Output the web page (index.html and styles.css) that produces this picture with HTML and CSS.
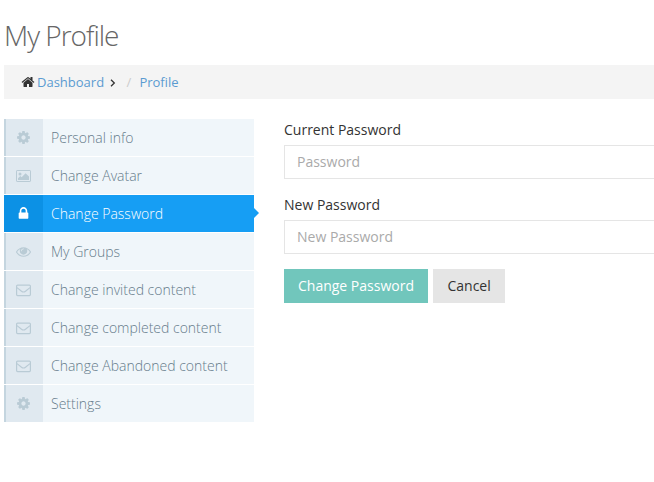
FILE: index.html
```html
<!DOCTYPE html>
<html lang="en">
<head>
<meta charset="utf-8">
<title>My Profile</title>
<link rel="stylesheet" href="styles.css">
</head>
<body>
<svg class="sprite" aria-hidden="true">
  <symbol id="home" viewBox="0 0 1792 1792"><path d="M1472 992v480q0 26-19 45t-45 19h-384v-384h-256v384h-384q-26 0-45-19t-19-45v-480q0-1 .5-3t.5-3l575-474 575 474q1 2 1 6zm223-69l-62 74q-8 9-21 11h-3q-13 0-21-7l-692-577-692 577q-12 8-24 7-13-2-21-11l-62-74q-8-10-7-23.5t11-21.5l719-599q32-26 76-26t76 26l244 204v-195q0-14 9-23t23-9h192q14 0 23 9t9 23v408l219 182q10 8 11 21.5t-7 23.5z"/></symbol>
  <symbol id="cog" viewBox="0 0 1792 1792"><path d="M1152 896q0-106-75-181t-181-75-181 75-75 181 75 181 181 75 181-75 75-181zm512-109v222q0 12-8 23t-20 13l-185 28q-19 54-39 91 35 50 107 138 10 12 10 25t-9 23q-27 37-99 108t-94 71q-12 0-26-9l-138-108q-44 23-91 38-16 136-29 186-7 28-36 28h-222q-14 0-24.5-8.5t-11.5-21.5l-28-184q-49-16-90-37l-141 107q-10 9-25 9-14 0-25-11-126-114-165-168-7-10-7-23 0-12 8-23 15-21 51-66.5t54-70.5q-27-50-41-99l-183-27q-13-2-21-12.5t-8-23.5v-222q0-12 8-23t19-13l186-28q14-46 39-92-40-57-107-138-10-12-10-24 0-10 9-23 26-36 98.5-107.5t94.5-71.5q13 0 26 10l138 107q44-23 91-38 16-136 29-186 7-28 36-28h222q14 0 24.5 8.5t11.5 21.5l28 184q49 16 90 37l142-107q9-9 24-9 13 0 25 10 129 119 165 170 7 8 7 22 0 12-8 23-15 21-51 66.5t-54 70.5q26 50 41 98l183 28q13 2 21 12.5t8 23.5z"/></symbol>
  <symbol id="picture" viewBox="0 0 16 14"><rect x=".5" y="1.5" width="14" height="11" rx=".6" fill="none" stroke="currentColor"/><circle cx="4" cy="5" r="1.5"/><path d="M2 11V9.3l2.3-2.2 1.3 1.2L9.6 4.2 13 7.5V11z"/></symbol>
  <symbol id="lock" viewBox="0 0 1792 1792"><path d="M640 768h512v-192q0-106-75-181t-181-75-181 75-75 181v192zm832 96v576q0 40-28 68t-68 28h-960q-40 0-68-28t-28-68v-576q0-40 28-68t68-28h32v-192q0-184 132-316t316-132 316 132 132 316v192h32q40 0 68 28t28 68z"/></symbol>
  <symbol id="eye" viewBox="0 0 1792 1792"><path d="M1664 960q-152-236-381-353 61 104 61 225 0 185-131.500 316.500t-316.500 131.500-316.500-131.500-131.500-316.500q0-121 61-225-229 117-381 353 133 205 333.500 326.500t434.500 121.500 434.500-121.500 333.500-326.500zm-720-384q0-20-14-34t-34-14q-125 0-214.500 89.500t-89.500 214.500q0 20 14 34t34 14 34-14 14-34q0-86 61-147t147-61q20 0 34-14t14-34zm848 384q0 34-20 69-140 230-376.500 368.500t-499.500 138.500-499.500-139-376.500-368q-20-35-20-69t20-69q140-229 376.500-368t499.500-139 499.500 139 376.500 368q20 35 20 69z"/></symbol>
  <symbol id="mail" viewBox="0 0 16 14"><rect x=".6" y="2.100" width="13.800" height="10.500" rx="1" fill="none" stroke="currentColor" stroke-width="1.200"/><path d="M1 4.600c1.500 1.300 3 2.400 4.500 3.600q2 1.600 4 0C11 7 12.500 5.900 14 4.600" fill="none" stroke="currentColor" stroke-width="1.100"/></symbol>
  <symbol id="angle" viewBox="0 0 6 8"><path d="M1 .8 4.300 4 1 7.200" fill="none" stroke="currentColor" stroke-width="1.300"/></symbol>
</svg>
<main class="page">
  <h1 class="title">My Profile</h1>
  <nav class="crumbs">
    <svg class="home"><use href="#home"/></svg>
    <a href="#">Dashboard</a>
    <svg class="angle"><use href="#angle"/></svg>
    <span class="slash">/</span>
    <a href="#">Profile</a>
  </nav>
  <div class="columns">
    <ul class="menu">
      <li><a href="#"><span class="icon"><svg><use href="#cog"/></svg></span>Personal info</a></li>
      <li><a href="#"><span class="icon"><svg class="wide"><use href="#picture"/></svg></span>Change Avatar</a></li>
      <li class="active"><a href="#"><span class="icon"><svg><use href="#lock"/></svg></span>Change Password</a></li>
      <li><a href="#"><span class="icon"><svg><use href="#eye"/></svg></span>My Groups</a></li>
      <li><a href="#"><span class="icon"><svg class="wide"><use href="#mail"/></svg></span>Change invited content</a></li>
      <li><a href="#"><span class="icon"><svg class="wide"><use href="#mail"/></svg></span>Change completed content</a></li>
      <li><a href="#"><span class="icon"><svg class="wide"><use href="#mail"/></svg></span>Change Abandoned content</a></li>
      <li><a href="#"><span class="icon"><svg><use href="#cog"/></svg></span>Settings</a></li>
    </ul>
    <form class="form">
      <label for="current">Current Password</label>
      <input id="current" type="password" placeholder="Password">
      <label for="new">New Password</label>
      <input id="new" type="password" placeholder="New Password">
      <div class="actions">
        <button type="button" class="primary">Change Password</button>
        <button type="button" class="cancel">Cancel</button>
      </div>
    </form>
  </div>
</main>
</body>
</html>
```
FILE: styles.css
```css
* { box-sizing: border-box; }
body {
  margin: 0;
  overflow: hidden;
  background: #fff;
  color: #333;
  font: 13px/20px "Open Sans", sans-serif;
}
svg { display: block; fill: currentColor; }
.sprite { position: absolute; width: 0; height: 0; }
a { color: #5b9bd1; text-decoration: none; }
.page { padding: 16px 0 0 4px; }
.title {
  margin: 0 0 11px;
  color: #666;
  font-size: 28px;
  font-weight: 300;
  line-height: 38px;
  letter-spacing: -1px;
}
.crumbs {
  display: flex;
  align-items: center;
  height: 34px;
  padding-left: 17px;
  background: #f4f4f4;
}
.home { width: 14px; height: 14px; margin-right: 2px; }
.angle { width: 6px; height: 8px; margin: 1px 11px 0 5.5px; }
.slash { margin-right: 8px; color: #ccc; }
.columns { display: flex; margin-top: 20px; }
.menu { flex: none; width: 250px; margin: 0; padding: 0; list-style: none; }
.menu li { position: relative; margin-bottom: 1px; }
.menu a {
  display: flex;
  align-items: center;
  height: 37px;
  border-left: 2px solid #c4d5df;
  background: #f0f6fa;
  color: #667c8b;
  font-size: 14px;
  font-weight: 300;
}
.icon {
  display: flex;
  align-items: center;
  justify-content: center;
  width: 37px;
  height: 37px;
  margin-right: 8px;
  padding-right: 2px;
  background: #e0e9f0;
  color: #b9cbd5;
}
.icon svg { width: 15px; height: 15px; }
.icon .wide { width: 16px; height: 14px; }
.menu .active a { border-color: #0c91e5; background: #169ef4; color: #fff; }
.menu .active .icon { background: #0c91e5; color: #fff; }
.active::after {
  content: "";
  position: absolute;
  top: 13px;
  left: 100%;
  border: 5px solid transparent;
  border-left-color: #169ef4;
  border-right: 0;
}
.form { flex: none; width: 400px; margin-left: 30px; }
.form label { display: block; margin: 1px 0 5px; font-size: 14px; }
.form input {
  display: block;
  width: 100%;
  height: 34px;
  margin-bottom: 16px;
  padding: 5px 12px 7px;
  border: 1px solid #e5e5e5;
  font: 14px/20px "Open Sans", sans-serif;
}
.form input::placeholder { color: #aaa; opacity: 1; }
.actions { display: flex; gap: 5px; margin-top: -1px; }
button {
  height: 34px;
  padding: 0 14px;
  border: 0;
  background: #e5e5e5;
  color: #333;
  font: 14px/20px "Open Sans", sans-serif;
}
.primary { background: #71c6bc; color: #fff; }
.cancel { padding: 0 14.5px; }
```
